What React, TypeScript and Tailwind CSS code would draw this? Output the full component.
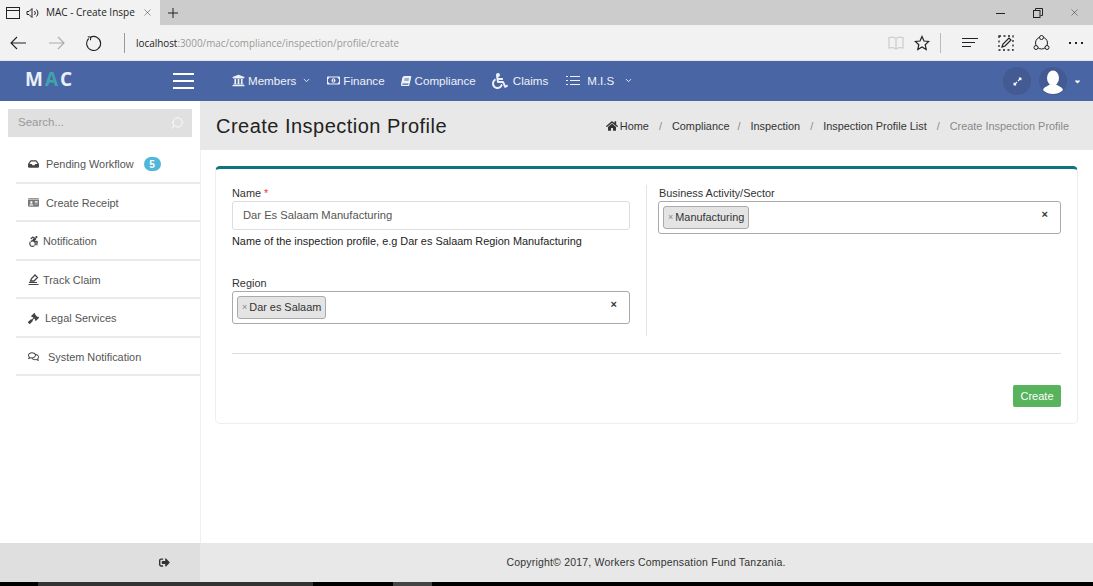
import { ChevronDown, Search, X } from "lucide-react";
import { FaAccessibleIcon } from "react-icons/fa";
import {
  FaBook,
  FaCaretDown,
  FaGavel,
  FaHome,
  FaIdCard,
  FaInbox,
  FaRegComments,
  FaRegMoneyBillAlt,
  FaSignOutAlt,
  FaUniversity,
  FaWheelchair,
  FaExpandAlt,
} from "react-icons/fa";

const arial = "font-['Liberation_Sans',Arial,sans-serif]";

function BrowserBar() {
  return (
    <div className="h-[61px] shrink-0 font-['Open_Sans',sans-serif] text-[#222]">
      <div className="flex h-[25px] bg-[#cccccc]">
        <div className="flex w-[160px] items-center bg-[#f2f2f2] pl-[6px]">
          <svg width="14" height="12" viewBox="0 0 14 12" fill="none" stroke="#222">
            <rect x="0.5" y="0.5" width="13" height="11" />
            <path d="M0.5 3.5h13" />
          </svg>
          <svg className="ml-[6px]" width="14" height="12" viewBox="0 0 14 12" fill="none" stroke="#222">
            <path d="M1 4.5h2l3-3v9l-3-3H1z" />
            <path d="M8.5 4a3 3 0 0 1 0 4M10.5 2.5a5 5 0 0 1 0 7" />
          </svg>
          <span className="ml-[6px] w-[90px] whitespace-nowrap text-[10px]">MAC - Create Inspe</span>
          <X size={11} strokeWidth={1} className="ml-[6px]" />
        </div>
        <svg className="ml-[7px] mt-[7px]" width="12" height="12" viewBox="0 0 12 12" stroke="#222" fill="none">
          <path d="M6 1v10M1 6h10" />
        </svg>
        <div className="ml-auto flex items-center pr-[13px]">
          <svg width="10" height="10" viewBox="0 0 10 10" stroke="#222"><path d="M1 5.500h9" /></svg>
          <svg className="ml-[28px]" width="10" height="10" viewBox="0 0 10 10" stroke="#222" fill="none">
            <rect x="0.5" y="2.500" width="6.500" height="7" />
            <path d="M2.500 2.500v-2h7v7h-2" />
          </svg>
          <X className="ml-[26px]" size={11} strokeWidth={1} />
        </div>
      </div>
      <div className="flex h-[36px] items-center border-b border-[#e4e4e4] bg-[#f2f2f2]">
        <svg className="ml-[10px]" width="17" height="14" viewBox="0 0 17 14" fill="none" stroke="#222" strokeWidth="1.1">
          <path d="M16 7H1M7 1L1 7l6 6" />
        </svg>
        <svg className="ml-[21px]" width="17" height="14" viewBox="0 0 17 14" fill="none" stroke="#aaa" strokeWidth="1.1">
          <path d="M1 7h15M10 1l6 6-6 6" />
        </svg>
        <svg className="ml-[21px]" width="16" height="16" viewBox="0 0 16 16" fill="none" stroke="#222" strokeWidth="1.1">
          <path d="M4.500 2.200a7 7 0 1 1-1.800 1.300" />
          <path d="M1.800 1.800l3 .4-.4 3" />
        </svg>
        <div className="ml-[22px] h-[20px] w-px bg-[#999]" />
        <div className="ml-[11px] pt-px text-[9.900px] text-[#999]">
          <span className="text-[#222]">localhost</span>:3000/mac/compliance/inspection/profile/create
        </div>
        <div className="ml-auto flex items-center">
          <svg width="16" height="14" viewBox="0 0 16 14" fill="none" stroke="#ccc" strokeWidth="1.200">
            <path d="M8 2.500C6.500 1 3 1 1 1.500v10.500c2-.5 5.500-.5 7 1 1.500-1.500 5-1.500 7-1V1.500C13 1 9.500 1 8 2.500zM8 2.500V13" />
          </svg>
          <svg className="ml-[10px]" width="16" height="16" viewBox="0 0 16 16" fill="none" stroke="#222" strokeWidth="1.200">
            <path d="M8 1.500l2 4.500 4.700.5-3.500 3.200 1 4.800L8 12l-4.200 2.500 1-4.800L1.300 6.500 6 6z" />
          </svg>
          <div className="ml-[10px] h-[20px] w-px bg-[#bbb]" />
          <svg className="ml-[21px]" width="17" height="12" viewBox="0 0 17 12" stroke="#222" strokeWidth="1.100">
            <path d="M0 1.500h16M0 5.500h13M0 9.500h9" />
          </svg>
          <svg className="ml-[19px]" width="16" height="16" viewBox="0 0 16 16" fill="none" stroke="#222">
            <path d="M1 1h14v14H1z" strokeDasharray="2 2.500" strokeWidth="1.300" />
            <path d="M4 12l1-3 6-6 2 2-6 6z" strokeWidth="1.200" />
          </svg>
          <svg className="ml-[19px]" width="17" height="16" viewBox="0 0 17 16" fill="none" stroke="#222">
            <circle cx="8.500" cy="8" r="6" />
            <circle cx="8.500" cy="2.500" r="2" fill="#f2f2f2" />
            <circle cx="3" cy="12.500" r="2" fill="#f2f2f2" />
            <circle cx="14" cy="12.500" r="2" fill="#f2f2f2" />
          </svg>
          <div className="ml-[19px] mr-[10px] flex gap-[4px]">
            <span className="h-[2px] w-[2px] bg-[#222]" />
            <span className="h-[2px] w-[2px] bg-[#222]" />
            <span className="h-[2px] w-[2px] bg-[#222]" />
          </div>
        </div>
      </div>
    </div>
  );
}

function TopNav() {
  const itemClass = "flex items-center text-[11.600px] text-[#eef1f8]";
  return (
    <div className={`flex h-[40px] shrink-0 items-center bg-[#4a65a3] ${arial}`}>
      <div className="ml-[25px] w-[148px] pb-[4px] font-['Open_Sans',sans-serif] text-[19px] font-bold leading-none tracking-[2px] text-[#e8f0fa]">
        M<span className="text-[#3fa5ad]">A</span>C
      </div>
      <div className="flex w-[21px] flex-col gap-[5px]">
        <span className="h-[2px] bg-white" />
        <span className="h-[2px] bg-white" />
        <span className="h-[2px] bg-white" />
      </div>
      <div className={`${itemClass} ml-[38px]`}>
        <FaUniversity size={13} className="mr-[3px]" />
        Members
        <ChevronDown size={9} strokeWidth={2.500} className="ml-[6px]" />
      </div>
      <div className={`${itemClass} ml-[16px]`}>
        <FaRegMoneyBillAlt size={13} className="mr-[3px]" />
        Finance
      </div>
      <div className={`${itemClass} ml-[16px]`}>
        <FaBook size={10} className="mr-[4px] -skew-x-12" />
        Compliance
      </div>
      <div className={`${itemClass} ml-[16px]`}>
        <FaWheelchair size={16} className="mr-[5px]" />
        Claims
      </div>
      <div className={`${itemClass} ml-[18px]`}>
        <svg className="mr-[7px]" width="14" height="11" viewBox="0 0 14 11" stroke="currentColor" strokeWidth="1">
          <path d="M0 1.500h2M4 1.500h10M0 5.500h2M4 5.500h10M0 9.500h2M4 9.500h10" />
        </svg>
        M.I.S
        <ChevronDown size={9} strokeWidth={2.500} className="ml-[10px]" />
      </div>
      <div className="ml-auto flex items-center pr-[11px]">
        <div className="flex h-[28px] w-[28px] items-center justify-center rounded-full bg-[#435a92] text-white">
          <FaExpandAlt size={9} />
        </div>
        <div className="ml-[8px] flex h-[28px] w-[28px] items-center justify-center rounded-full bg-[#435a92]">
          <svg width="28" height="28" viewBox="0 0 28 28" fill="#fff">
            <ellipse cx="14" cy="11" rx="6" ry="7.500" />
            <path d="M11 17c-1 2-6 2.500-7 6 2.500 2.500 6 4 10 4s7.500-1.500 10-4c-1-3.500-6-4-7-6z" />
          </svg>
        </div>
        <FaCaretDown size={9} className="ml-[6px] text-white" />
      </div>
    </div>
  );
}

function StampIcon() {
  return (
    <svg width="11" height="11" viewBox="0 0 11 11" fill="none" stroke="currentColor">
      <path d="M0.500 10.500h10M1 8.500h8" />
      <path d="M2.500 7l1-2.500 3.500-3.500 2.500 2.500-3.500 3.500z" strokeWidth="1.300" />
    </svg>
  );
}

const menu = [
  { icon: <FaInbox size={12} />, gap: "ml-[7px]", label: "Pending Workflow", badge: "5" },
  { icon: <FaIdCard size={13} className="text-[#777]" />, gap: "ml-[7px]", label: "Create Receipt" },
  { icon: <FaAccessibleIcon size={11} />, gap: "ml-[4px]", label: "Notification" },
  { icon: <StampIcon />, gap: "ml-[4px]", label: "Track Claim" },
  { icon: <FaGavel size={11} />, gap: "ml-[6px]", label: "Legal Services" },
  { icon: <FaRegComments size={11} />, gap: "ml-[9px]", label: "System Notification" },
];

function Sidebar() {
  return (
    <div className={`flex w-[200px] shrink-0 flex-col bg-white ${arial}`}>
      <div className="ml-[8px] mt-[8px] flex h-[28px] w-[184px] items-center justify-between bg-[#e0e0e0] pl-[10px] pr-[8px] text-[11.500px] text-[#999]">
        Search...
        <Search size={14} strokeWidth={1.500} className="-scale-x-100 text-white" />
      </div>
      <div className="ml-[16px] mt-[8px]">
        {menu.map((item) => (
          <div key={item.label} className="flex h-[38.500px] items-center border-b-2 border-[#eaeaea] pl-[12px] pt-[2px] text-[10.900px] text-[#555]">
            <span className="flex w-[11px] justify-center text-[#444]">{item.icon}</span>
            <span className={item.gap}>{item.label}</span>
            {item.badge && (
              <span className="ml-[10px] flex h-[14px] w-[17px] items-center justify-center rounded-full bg-[#4fb8d8] text-[10px] font-bold text-white">
                {item.badge}
              </span>
            )}
          </div>
        ))}
      </div>
    </div>
  );
}

function Crumb({ children, muted, className = "" }: { children: React.ReactNode; muted?: boolean; className?: string }) {
  return <span className={`${muted ? "text-[#888]" : "text-[#333]"} ${className}`}>{children}</span>;
}

function Tag({ label }: { label: string }) {
  return (
    <div className="flex h-[23px] items-center rounded-[3px] border border-[#aaa] bg-[#e4e4e4] px-[4px] text-[10.900px] text-[#333]">
      <span className="mr-[2px] text-[9px] text-[#888]">×</span>
      {label}
    </div>
  );
}

function MultiSelect({ label }: { label: string }) {
  return (
    <div className="flex h-[33px] items-center justify-between rounded-[3px] border border-[#aaa] bg-white pl-[4px] pr-[12px]">
      <Tag label={label} />
      <span className="mb-[7px] text-[11px] font-bold leading-none text-[#333]">×</span>
    </div>
  );
}

function Content() {
  return (
    <div className={`flex min-w-0 flex-1 flex-col bg-white ${arial}`}>
      <div className="flex h-[49px] shrink-0 items-center justify-between bg-[#e8e8e8] pl-[16px] pr-[24px]">
        <h1 className="text-[20px] tracking-[0.480px] text-[#222]">Create Inspection Profile</h1>
        <div className="flex items-center gap-[10px] pt-[2px] text-[10.900px]">
          <span className="flex items-center text-[#333]">
            <FaHome size={12} className="mr-[2px]" />
            Home
          </span>
          <Crumb muted>/</Crumb>
          <Crumb className="-mr-[2px]">Compliance</Crumb>
          <Crumb muted>/</Crumb>
          <Crumb>Inspection</Crumb>
          <Crumb muted>/</Crumb>
          <Crumb>Inspection Profile List</Crumb>
          <Crumb muted>/</Crumb>
          <Crumb muted>Create Inspection Profile</Crumb>
        </div>
      </div>
      <div className="min-h-0 flex-1 border-l border-[#f0f0f0]">
        <div className="ml-[14px] mr-[15px] mt-[16px] h-[258px] rounded-[5px] border border-t-[3px] border-[#eeeeee] border-t-[#0e7480] px-[16px] pt-[16px]">
          <div className="flex h-[151px]">
            <div className="w-[398px] text-[10.900px] text-[#333]">
              <div className="h-[16px] leading-[16px]">
                Name <span className="text-[#e44]">*</span>
              </div>
              <div className="flex h-[29px] items-center rounded-[3px] border border-[#ddd] pl-[10px] text-[11.200px] text-[#555]">Dar Es Salaam Manufacturing</div>
              <div className="mt-[3px] h-[14px] text-[#222]">Name of the inspection profile, e.g Dar es Salaam Region Manufacturing</div>
              <div className="mt-[28px] h-[16px]">Region</div>
              <MultiSelect label="Dar es Salaam" />
            </div>
            <div className="ml-[16px] h-[151px] w-px bg-[#e4e4e4]" />
            <div className="ml-[11px] flex-1 text-[10.900px] text-[#333]">
              <div className="h-[16px] pl-px leading-[16px]">Business Activity/Sector</div>
              <MultiSelect label="Manufacturing" />
            </div>
          </div>
          <div className="mt-[17px] h-px bg-[#dddddd]" />
          <div className="mt-[31px] flex justify-end">
            <div className="flex h-[22px] w-[48px] items-center justify-center rounded-[2px] bg-[#57b45c] text-[11px] text-white">Create</div>
          </div>
        </div>
      </div>
    </div>
  );
}

function Footer() {
  return (
    <div className={`flex h-[39px] shrink-0 ${arial}`}>
      <div className="flex w-[200px] items-center justify-end bg-[#dfdfdf] pr-[30px] text-[#333]">
        <FaSignOutAlt size={11} />
      </div>
      <div className="flex flex-1 items-center justify-center bg-[#e8e8e8] pr-[1px] pt-[1px] text-[10.500px] tracking-[0.200px] text-[#333]">
        Copyright© 2017, Workers Compensation Fund Tanzania.
      </div>
    </div>
  );
}

function Taskbar() {
  return (
    <div className="flex h-[4px] shrink-0 bg-black">
      <div className="ml-[38px] w-[275px] bg-[#333]" />
      <div className="ml-[80px] w-[39px] bg-[#444]" />
    </div>
  );
}

export default function App() {
  return (
    <div className="flex h-[586px] w-[1093px] flex-col overflow-hidden bg-white">
      <BrowserBar />
      <TopNav />
      <div className="flex min-h-0 flex-1">
        <Sidebar />
        <Content />
      </div>
      <Footer />
      <Taskbar />
    </div>
  );
}
